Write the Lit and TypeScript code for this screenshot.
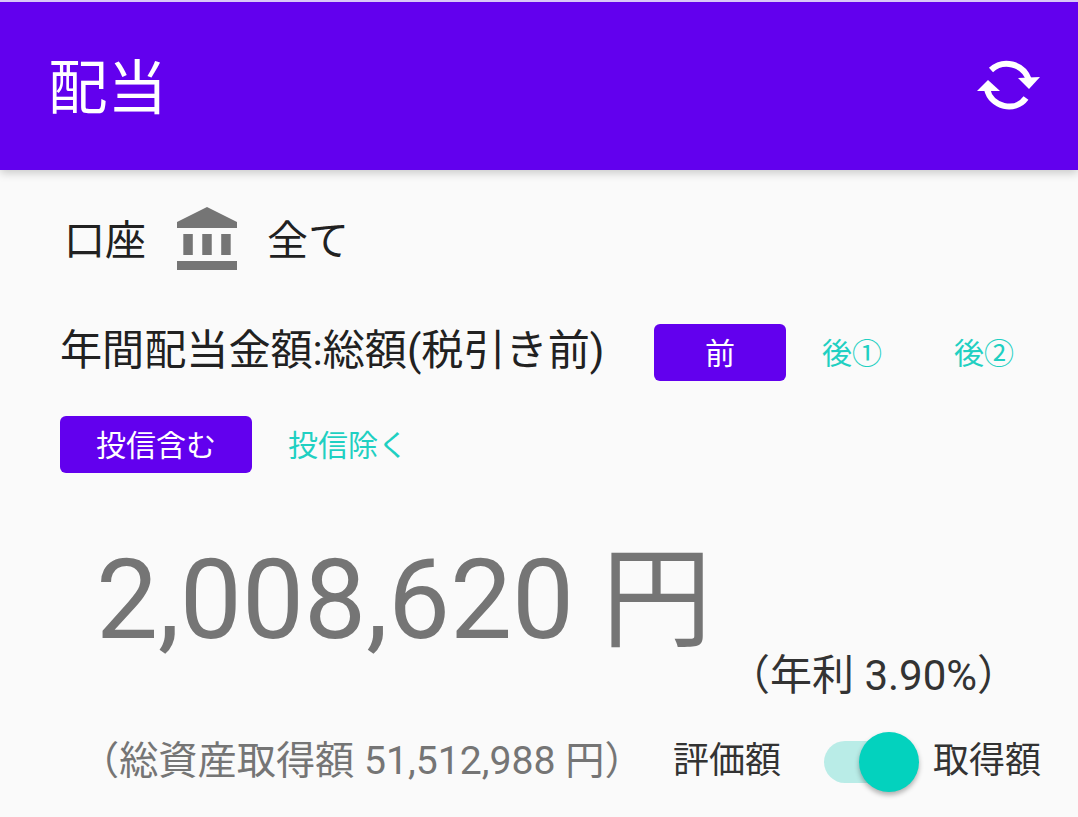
import { LitElement, css, html } from 'lit';
import { customElement } from 'lit/decorators.js';

@customElement('app-root')
export class AppRoot extends LitElement {
  static get styles() {
    return css`
      :host {
        display: block;
        width: 1078px;
        height: 817px;
        overflow: hidden;
        background: #fafafa;
        font-family: Roboto, "Noto Sans CJK JP", sans-serif;
        color: #212121;
      }
      .appbar {
        height: 162px;
        border-top: 2px solid #d9c8f7;
        background: #6200ee;
        box-shadow: 0 3px 9px rgba(0, 0, 0, 0.2);
        display: flex;
        align-items: center;
        justify-content: space-between;
        padding: 0 38px 6px 48px;
        color: #fff;
        font-size: 59.5px;
      }
      .appbar svg {
        display: block;
        margin-top: 4px;
      }
      .account {
        display: flex;
        align-items: center;
        height: 63px;
        margin: 37px 0 0 64px;
        font-size: 41px;
      }
      .account-text {
        margin-top: -4px;
      }
      .bank {
        display: block;
        margin: 0 30px 0 31px;
      }
      .filter {
        display: flex;
        align-items: center;
        margin: 54px 28px 0 60px;
      }
      .filter-title {
        flex: 1;
        font-size: 42.1px;
        line-height: 54px;
        margin-top: -4px;
      }
      .btn {
        height: 57px;
        display: flex;
        align-items: center;
        justify-content: center;
        border-radius: 6px;
        font-size: 30px;
        padding-bottom: 3px;
        box-sizing: border-box;
        color: #1fd0c2;
      }
      .btn.wide {
        width: 132px;
      }
      .btn.fund {
        width: 192px;
      }
      .btn.on {
        background: #6200ee;
        color: #fff;
      }
      .fund-row {
        display: flex;
        margin: 35px 0 0 60px;
      }
      .amount {
        margin: 62px 0 0 96px;
        font-size: 110.5px;
        line-height: 130px;
        color: #757575;
      }
      .yield {
        margin: -17px 0 0 728px;
        font-size: 42px;
        line-height: 56px;
        color: #333;
      }
      .bottom {
        display: flex;
        align-items: center;
        margin: 34px 0 0 80px;
      }
      .total {
        width: 593px;
        font-size: 39.2px;
        line-height: 50px;
        margin-top: -2px;
        color: #757575;
      }
      .toggle-label {
        font-size: 36px;
        line-height: 50px;
        margin-top: -2px;
        color: #333;
      }
      .toggle {
        position: relative;
        width: 74px;
        height: 42px;
        margin: 0 35px 0 43px;
        border-radius: 21px;
        background: #b9ece7;
      }
      .thumb {
        position: absolute;
        top: -9px;
        right: -21px;
        width: 60px;
        height: 60px;
        border-radius: 50%;
        background: #03d2be;
        box-shadow: 0 3px 5px rgba(0, 0, 0, 0.3);
      }
    `;
  }

  render() {
    return html`
      <header class="appbar">
        <span>配当</span>
        <svg width="64" height="56" viewBox="975 58 64 56" fill="none">
          <path d="M990 71 C1002 60 1022 64 1028 81" stroke="#fff" stroke-width="6"/>
          <path d="M1017 79 L1039 78 L1028 90 Z" fill="#fff"/>
          <path d="M986 90 C990 108 1014 114 1025 99" stroke="#fff" stroke-width="6"/>
          <path d="M976 92 L987 81 L999 92 Z" fill="#fff"/>
        </svg>
      </header>
      <div class="account">
        <span class="account-text">口座</span>
        <svg class="bank" width="60" height="63" viewBox="2 1 19 21" preserveAspectRatio="none" fill="#757575">
          <path d="M4 10v7h3v-7H4zm6 0v7h3v-7h-3zM2 22h19v-3H2v3zm14-12v7h3v-7h-3zm-4.500-9L2 6v2h19V6l-9.500-5z"/>
        </svg>
        <span class="account-text">全て</span>
      </div>
      <div class="filter">
        <span class="filter-title">年間配当金額:総額(税引き前)</span>
        <span class="btn wide on">前</span>
        <span class="btn wide">後①</span>
        <span class="btn wide">後②</span>
      </div>
      <div class="fund-row">
        <span class="btn fund on">投信含む</span>
        <span class="btn fund">投信除く</span>
      </div>
      <div class="amount">2,008,620 円</div>
      <div class="yield">（年利 3.90%）</div>
      <div class="bottom">
        <span class="total">（総資産取得額 51,512,988 円）</span>
        <span class="toggle-label">評価額</span>
        <span class="toggle"><span class="thumb"></span></span>
        <span class="toggle-label">取得額</span>
      </div>
    `;
  }
}
